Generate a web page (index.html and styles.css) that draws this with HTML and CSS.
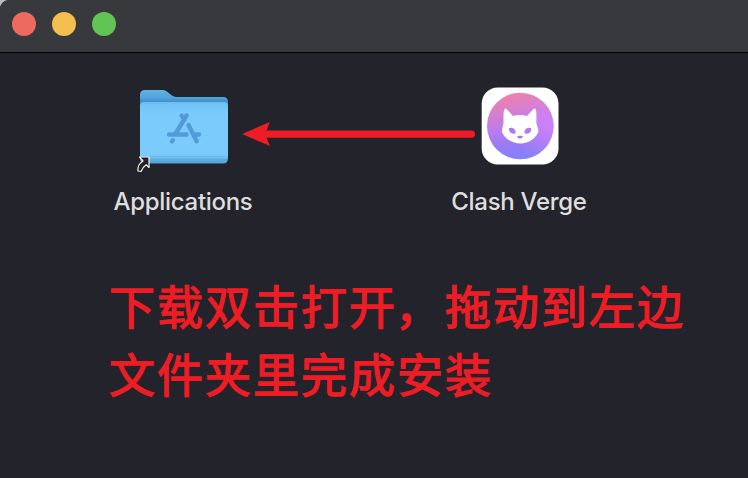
FILE: index.html
```html
<!DOCTYPE html>
<html lang="zh-CN">
<head>
<meta charset="utf-8">
<title>Clash Verge</title>
<link rel="stylesheet" href="styles.css">
</head>
<body>
<div class="window">
  <header class="titlebar">
    <span class="dot close"></span>
    <span class="dot minimize"></span>
    <span class="dot expand"></span>
  </header>
  <main class="content">
    <section class="icons">
      <div class="item">
        <svg class="icon" width="120" height="100" viewBox="0 0 120 100">
          <defs>
            <linearGradient id="back" gradientUnits="userSpaceOnUse" x1="0" y1="10" x2="0" y2="24">
              <stop offset="0" stop-color="#5eb1e6"/><stop offset=".5" stop-color="#53a5de"/><stop offset="1" stop-color="#3b84c2"/>
            </linearGradient>
            <linearGradient id="front" gradientUnits="userSpaceOnUse" x1="0" y1="22" x2="0" y2="84">
              <stop offset="0" stop-color="#6abcf0"/><stop offset=".06" stop-color="#74c5f7"/><stop offset=".2" stop-color="#7bcbfc"/><stop offset=".84" stop-color="#7bcbfc"/><stop offset=".9" stop-color="#6fc0f2"/><stop offset=".92" stop-color="#5cafe3"/><stop offset="1" stop-color="#4f9fd6"/>
            </linearGradient>
          </defs>
          <path fill="url(#back)" d="M15 15Q15 10 20 10H37.500C43 10 45.500 17 52 17H98Q103 17 103 22V40H15Z"/>
          <path fill="url(#front)" d="M15 26Q15 22 19 22H99Q103 22 103 26V78Q103 83.500 98 83.500H20Q15 83.500 15 78Z"/>
          <path stroke="#69b9eb" stroke-width="1" d="M16 76.500H102"/>
          <g stroke="#539bd8" stroke-width="4.400" stroke-linecap="round" fill="none">
            <path d="M61.500 35.500L51 53M56.500 35.500L59.500 40M63.500 45L71.700 61.200M44 54.500H61.500M68.500 54.500H74M47.800 60.200L47 61.400"/>
          </g>
          <path fill="#23232a" stroke="#f2f2ed" stroke-width="1.200" stroke-linejoin="round" d="M14.500 77H24V87.500L21.200 84.800C18 87 17 89 16 91.500L13 91Q12 85 18 81Z"/>
        </svg>
        <span class="label">Applications</span>
      </div>
      <svg class="arrow" width="234" height="28" viewBox="0 0 234 28">
        <path fill="#ee1c24" d="M0 14L28 2L24.500 10.500H229.500A3.600 3.600 0 0 1 229.500 17.700H24.500L28 26Z"/>
      </svg>
      <div class="item">
        <svg class="icon" width="120" height="100" viewBox="0 0 120 100">
          <defs>
            <linearGradient id="disc" x1=".3" y1="0" x2=".5" y2="1">
              <stop offset="0" stop-color="#ef82aa"/><stop offset=".22" stop-color="#dc7fc5"/><stop offset=".5" stop-color="#bd7bee"/><stop offset=".8" stop-color="#947bf5"/><stop offset="1" stop-color="#8282ff"/>
            </linearGradient>
            <radialGradient id="glow" cx="1" cy=".5" r=".6">
              <stop offset="0" stop-color="#d883fa" stop-opacity=".8"/><stop offset="1" stop-color="#d883fa" stop-opacity="0"/>
            </radialGradient>
          </defs>
          <rect x="21.700" y="7.500" width="76.800" height="77" rx="16" fill="#fff"/>
          <circle cx="60.300" cy="46" r="33.300" fill="url(#disc)"/>
          <circle cx="60.300" cy="46" r="33.300" fill="url(#glow)"/>
          <path fill="#fff" d="M45.800 28.500C47.500 29.500 50.500 33.500 53 36Q60 34 67 36C69.500 33.500 72.500 29.500 74.500 28.500Q76.300 28.500 76.400 34V43.500C77.500 47 78.800 49.500 78.200 52C76 58 69 63.500 60.300 63.500S44 58 42 52C41.500 49.500 42.800 47 43.500 43.500V34Q43.800 28.500 45.800 28.500Z"/>
          <path fill="#ae7bee" d="M48.800 48.500C51 46.800 56 48.500 55.700 53.200C52.500 54.600 49 53 48.800 48.500ZM71.400 48.500C69.200 46.800 64.200 48.500 64.500 53.200C67.700 54.600 71.200 53 71.400 48.500ZM57 56Q60 55.300 63 56Q62.500 58.500 60 58.700Q57.500 58.500 57 56Z"/>
        </svg>
        <span class="label">Clash Verge</span>
      </div>
    </section>
    <p class="note">下载双击打开<span class="comma">，</span>拖动到左边<br>文件夹里完成安装</p>
  </main>
</div>
</body>
</html>
```
FILE: styles.css
```css
* { box-sizing: border-box; }
body { margin: 0; background: #b9b9b9; }
.window {
  height: 478px;
  overflow: hidden;
  background: #23232b;
  border-top-left-radius: 9px;
}
.titlebar {
  height: 53px;
  display: flex;
  gap: 16px;
  padding: 12px;
  background: #38393d;
  border-bottom: 1px solid #000;
}
.dot { width: 24px; height: 24px; border-radius: 50%; }
.close { background: #ed6a5e; }
.minimize { background: #f5bf4f; }
.expand { background: #61c554; }
.content { padding-top: 27px; }
.icons {
  display: flex;
  align-items: flex-start;
  padding-left: 103px;
}
.item {
  width: 160px;
  display: flex;
  flex-direction: column;
  align-items: center;
}
.icon { display: block; margin-left: 2px; }
.item:first-child .icon { margin-left: 4px; }
.arrow { margin: 40px -37px 0 -21px; flex: none; }
.label {
  margin-top: 6px;
  font: 500 24px/32px Inter, "Liberation Sans", sans-serif;
  letter-spacing: -.3px;
  color: #dededf;
  white-space: nowrap;
}
.note {
  margin: 52px 0 0 109px;
  font: 400 46px/68px "Noto Sans CJK SC", sans-serif;
  letter-spacing: 2px;
  color: #ee1c24;
  -webkit-text-stroke: 1.3px #ee1c24;
  white-space: nowrap;
}
.comma { margin: 0 2px 0 -2px; }
```
